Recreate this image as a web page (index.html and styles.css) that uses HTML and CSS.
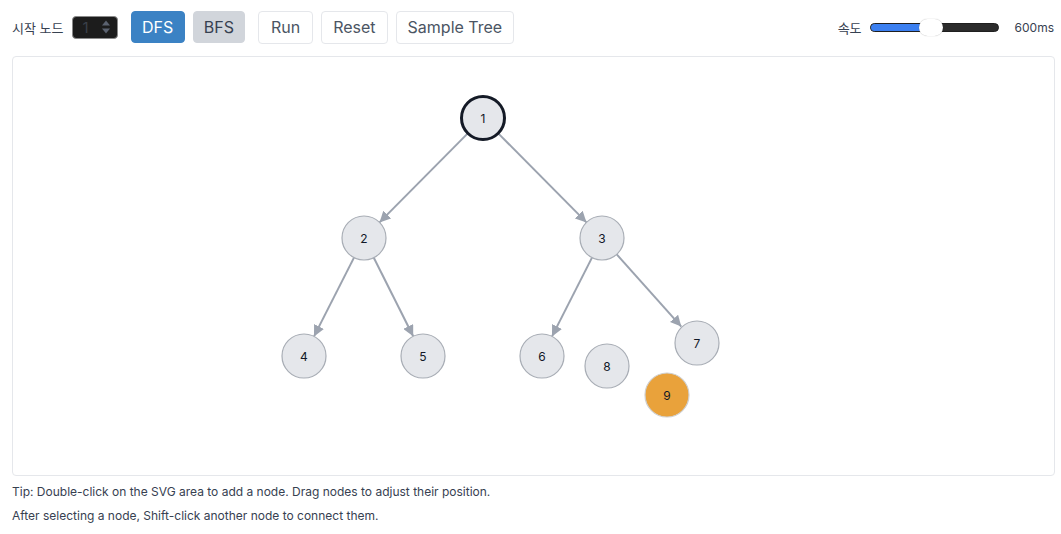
FILE: index.html
```html
<!DOCTYPE html>
<html lang="ko">
<head>
<meta charset="utf-8">
<title>DFS / BFS</title>
<link rel="stylesheet" href="styles.css">
</head>
<body>
<div class="app">
  <div class="toolbar">
    <div class="left">
      <label class="label">시작 노드</label>
      <span class="num-input">
        <span class="num-value">1</span>
        <svg class="spin" width="10" height="16" viewBox="0 0 10 16"><path d="M1 6.5 L5 1.5 L9 6.5 Z" fill="#5b6270"/><path d="M1 9.5 L5 14.5 L9 9.5 Z" fill="#5b6270"/></svg>
      </span>
      <div class="group group-algo">
        <button class="btn btn-primary">DFS</button>
        <button class="btn btn-muted">BFS</button>
      </div>
      <div class="group">
        <button class="btn btn-run">Run</button>
        <button class="btn">Reset</button>
        <button class="btn">Sample Tree</button>
      </div>
    </div>
    <div class="right">
      <span class="label">속도</span>
      <div class="slider">
        <div class="slider-fill" style="width:60px"></div>
        <div class="slider-thumb" style="left:48px"></div>
      </div>
      <span class="speed">600ms</span>
    </div>
  </div>
  <div class="canvas">
    <svg class="graph" width="1041" height="418" viewBox="13 57 1041 418">
      <defs>
        <marker id="arrow" markerUnits="userSpaceOnUse" markerWidth="11" markerHeight="11" refX="11" refY="5.5" orient="auto">
          <path d="M0 0 L11 5.5 L0 11 Z" fill="#9ca3af"/>
        </marker>
      </defs>
      <g class="edges">
        <line x1="467.5" y1="133.6" x2="379.5" y2="222.4" marker-end="url(#arrow)"/>
        <line x1="498.5" y1="133.6" x2="586.5" y2="222.4" marker-end="url(#arrow)"/>
        <line x1="354.0" y1="257.6" x2="314.0" y2="336.4" marker-end="url(#arrow)"/>
        <line x1="373.8" y1="257.7" x2="413.2" y2="336.3" marker-end="url(#arrow)"/>
        <line x1="592.0" y1="257.6" x2="552.0" y2="336.4" marker-end="url(#arrow)"/>
        <line x1="616.7" y1="254.4" x2="681.3" y2="326.6" marker-end="url(#arrow)"/>
      </g>
      <g class="nodes">
        <g class="node start"><circle cx="483" cy="118" r="21.5"/><text x="483" y="118">1</text></g>
        <g class="node"><circle cx="364" cy="238" r="22"/><text x="364" y="238">2</text></g>
        <g class="node"><circle cx="602" cy="238" r="22"/><text x="602" y="238">3</text></g>
        <g class="node"><circle cx="304" cy="356" r="22"/><text x="304" y="356">4</text></g>
        <g class="node"><circle cx="423" cy="356" r="22"/><text x="423" y="356">5</text></g>
        <g class="node"><circle cx="542" cy="356" r="22"/><text x="542" y="356">6</text></g>
        <g class="node"><circle cx="697" cy="343" r="22"/><text x="697" y="343">7</text></g>
        <g class="node"><circle cx="607" cy="366" r="22"/><text x="607" y="366">8</text></g>
        <g class="node active"><circle cx="667" cy="395" r="22"/><text x="667" y="395">9</text></g>
      </g>
    </svg>
  </div>
  <p class="tip">Tip: Double-click on the SVG area to add a node. Drag nodes to adjust their position.</p>
  <p class="tip">After selecting a node, Shift-click another node to connect them.</p>
</div>
</body>
</html>
```

FILE: styles.css
```css
* { box-sizing: border-box; }
html, body { margin: 0; padding: 0; background: #ffffff; }
body {
  font-family: Inter, "Noto Sans CJK KR", "Noto Sans", sans-serif;
  color: #1f2937;
}
.app { padding: 10px 7px 0 12px; }
.toolbar {
  display: flex;
  align-items: center;
  justify-content: space-between;
  height: 34px;
}
.left, .right { display: flex; align-items: center; }
.label { font-size: 13px; color: #374151; }
.num-input {
  display: inline-flex;
  align-items: center;
  justify-content: space-between;
  width: 46px;
  height: 23px;
  margin-left: 8px;
  padding: 0 6px 0 10px;
  background: #1c1c1c;
  border: 1px solid #8a8a8a;
  border-radius: 4px;
}
.num-value { font-size: 15px; color: #3a404a; line-height: 1; }
.spin { display: block; }
.group { display: flex; gap: 8px; margin-left: 13px; }
.group-algo { margin-left: 13px; }
.btn {
  font-family: inherit;
  font-size: 16px;
  line-height: 20px;
  height: 33px;
  padding: 0 11px;
  color: #4b5563;
  background: #ffffff;
  border: 1px solid #e5e7eb;
  border-radius: 4px;
}
.btn-run { padding: 0 12px; }
.btn-primary { background: #3b82c4; border-color: #3b82c4; color: #ffffff; padding: 0 10.5px; height: 32px; }
.btn-muted { background: #d1d5db; border-color: #d1d5db; color: #374151; padding: 0 10px; height: 32px; }
.right .label { margin-right: 8px; }
.slider {
  position: relative;
  width: 129px;
  height: 9px;
  background: #2b2b2b;
  border-radius: 5px;
  border: 1px solid #1f1f1f;
}
.slider-fill {
  position: absolute;
  left: 0; top: 0; bottom: 0;
  background: #3b7ff0;
  border-radius: 5px 0 0 5px;
}
.slider-thumb {
  position: absolute;
  top: -5px;
  width: 24px;
  height: 17px;
  background: #ffffff;
  border-radius: 9px;
  box-shadow: 0 0 1px rgba(0,0,0,0.35);
}
.speed { font-size: 12px; color: #374151; margin-left: 16px; }
.canvas {
  margin-top: 12px;
  width: 1043px;
  height: 420px;
  border: 1px solid #e5e7eb;
  border-radius: 4px;
  background: #ffffff;
}
.graph { display: block; }
.edges line { stroke: #9ca3af; stroke-width: 2; }
.node circle { fill: #e5e7eb; stroke: #a8adb5; stroke-width: 1.2; }
.node text {
  font-family: Inter, "Noto Sans", sans-serif;
  font-size: 12px;
  fill: #111827;
  text-anchor: middle;
  dominant-baseline: central;
}
.node.start circle { stroke: #141a26; stroke-width: 3; }
.node.active circle { fill: #e9a23b; stroke: #cfcfcf; }
.tip {
  margin: 8px 0 0 0;
  font-size: 12px;
  line-height: 16px;
  color: #374151;
}
```
